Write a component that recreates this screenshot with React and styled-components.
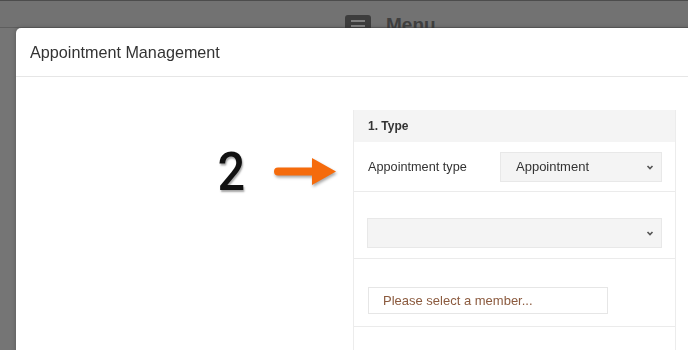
import styled, { createGlobalStyle } from "styled-components";

const Global = createGlobalStyle`
  html, body {
    margin: 0;
    padding: 0;
    height: 100%;
    overflow: hidden;
    background: #757575;
    font-family: "Liberation Sans", Arial, sans-serif;
  }
`;

const Navbar = styled.div`
  height: 26px;
  border-top: 1px solid #4c4c4c;
  border-bottom: 1px solid #5e5e5e;
  background: #727272;
  display: flex;
  align-items: flex-end;
  gap: 15px;
  padding-left: 345px;
`;

const MenuIcon = styled.div`
  width: 26px;
  height: 16px;
  margin-bottom: -4px;
  border-radius: 3px;
  background: #3d3d3d;
  display: flex;
  flex-direction: column;
  justify-content: center;
  align-items: center;
  gap: 3px;

  span {
    width: 14px;
    height: 2px;
    background: #808080;
  }
`;

const MenuText = styled.div`
  font-size: 19px;
  font-weight: bold;
  color: #3f3f3f;
  margin-bottom: -9px;
`;

const Modal = styled.div`
  position: fixed;
  top: 28px;
  left: 16px;
  width: 700px;
  bottom: -10px;
  background: #fff;
  border-radius: 5px 0 0 0;
  box-shadow: 0 0 4px rgba(0, 0, 0, 0.25);
  display: flex;
  flex-direction: column;
`;

const Header = styled.div`
  height: 48px;
  flex: none;
  border-bottom: 1px solid #e6e6e6;
  display: flex;
  align-items: center;
  padding-left: 14px;
  font-size: 16.2px;
  color: #333;
`;

const Body = styled.div`
  flex: 1;
  display: grid;
  grid-template-columns: 337px 323px;
  padding-top: 33px;
`;

const Annotation = styled.div`
  display: flex;
  justify-content: flex-end;
  align-items: center;
  gap: 27px;
  padding-right: 15px;
  margin-top: 37px;
  height: 50px;
`;

const Number = styled.div`
  font-family: Roboto, "Liberation Sans", sans-serif;
  font-size: 54px;
  font-weight: 500;
  line-height: 1;
  color: #111;
  transform: scaleX(0.9);
  text-shadow: 1px 2px 2px rgba(0, 0, 0, 0.35);
`;

const Panel = styled.div`
  border-left: 1px solid #ececec;
  border-right: 1px solid #ececec;
`;

const PanelHeading = styled.div`
  height: 32px;
  background: #f4f4f4;
  display: flex;
  align-items: center;
  padding-left: 14px;
  font-size: 12px;
  font-weight: bold;
  color: #333;
`;

const Row = styled.div`
  height: ${(p) => p.$h}px;
  border-bottom: 1px solid #ebebeb;
  display: flex;
  align-items: ${(p) => (p.$bottom ? "flex-end" : "center")};
  padding: 0 13px 0 14px;
  padding-bottom: ${(p) => p.$pb || 0}px;
  box-sizing: border-box;
`;

const Label = styled.div`
  width: 133px;
  font-size: 12.7px;
  color: #333;
`;

const Select = styled.div`
  flex: ${(p) => (p.$full ? 1 : "none")};
  width: ${(p) => (p.$full ? "auto" : "162px")};
  height: 30px;
  box-sizing: border-box;
  background: #f4f4f4;
  border: 1px solid #e8e8e8;
  display: flex;
  align-items: center;
  justify-content: space-between;
  padding: 0 6px 0 15px;
  font-size: 13px;
  color: #333;
  margin-left: ${(p) => (p.$full ? "-1px" : 0)};
`;

const Input = styled.div`
  width: 240px;
  height: 27px;
  box-sizing: border-box;
  border: 1px solid #e6e6e6;
  display: flex;
  align-items: center;
  padding-left: 14px;
  font-size: 13px;
  color: #8b5a3e;
`;

function Chevron() {
  return (
    <svg width="10" height="10" viewBox="0 0 10 10">
      <path d="M2.5 4 L5 6.5 L7.5 4" fill="none" stroke="#555" strokeWidth="1.6" />
    </svg>
  );
}

function Arrow() {
  return (
    <svg width="64" height="32" viewBox="0 0 64 32" style={{ filter: "drop-shadow(1px 2px 1.5px rgba(0,0,0,0.35))" }}>
      <path d="M4 11.5 H38 V2 L62 15.5 L38 29 V19.5 H4 A4 4 0 0 1 4 11.5 Z" fill="#f56b0c" />
    </svg>
  );
}

export default function App() {
  return (
    <>
      <Global />
      <Navbar>
        <MenuIcon>
          <span />
          <span />
        </MenuIcon>
        <MenuText>Menu</MenuText>
      </Navbar>
      <Modal>
        <Header>Appointment Management</Header>
        <Body>
          <div>
            <Annotation>
              <Number>2</Number>
              <Arrow />
            </Annotation>
          </div>
          <Panel>
            <PanelHeading>1. Type</PanelHeading>
            <Row $h={50}>
              <Label>Appointment type</Label>
              <Select>
                Appointment
                <Chevron />
              </Select>
            </Row>
            <Row $h={67} $bottom $pb={10}>
              <Select $full>
                <span />
                <Chevron />
              </Select>
            </Row>
            <Row $h={68} $bottom $pb={12}>
              <Input>Please select a member...</Input>
            </Row>
          </Panel>
        </Body>
      </Modal>
    </>
  );
}
